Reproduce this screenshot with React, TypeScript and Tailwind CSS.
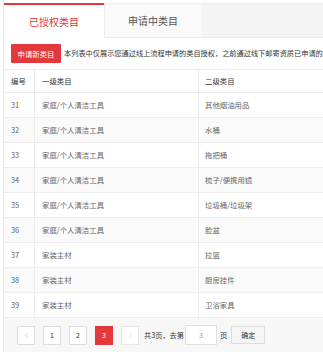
import { ChevronLeft, ChevronRight } from "lucide-react";

const rows = [
    { id: 31, first: "家庭/个人清洁工具", second: "其他烟油用品" },
    { id: 32, first: "家庭/个人清洁工具", second: "水桶" },
    { id: 33, first: "家庭/个人清洁工具", second: "拖把桶" },
    { id: 34, first: "家庭/个人清洁工具", second: "梳子/便携用镜" },
    { id: 35, first: "家庭/个人清洁工具", second: "垃圾桶/垃圾架" },
    { id: 36, first: "家庭/个人清洁工具", second: "脸盆" },
    { id: 37, first: "家装主材", second: "拉篮" },
    { id: 38, first: "家装主材", second: "厨房挂件" },
    { id: 39, first: "家装主材", second: "卫浴家具" },
];

export default function App() {
    return (
        <div
            className="w-[323px] h-[356px] bg-white overflow-hidden"
            style={{ fontFamily: '"Noto Sans CJK SC", "Noto Sans", sans-serif' }}
        >
            <div className="ml-[3px] h-[352px] border-l border-[#e6e6e6] flex flex-col">
                {/* Tabs */}
                <div className="flex h-[38px] pt-[3px]">
                    <div className="w-[100px] border-t-2 border-[#e4393c] bg-white flex items-center justify-center text-[10px] text-[#d9363e]">
                        已授权类目
                    </div>
                    <div className="w-[97px] border-l border-b border-t border-[#ececec] bg-[#fafafa] flex items-center justify-center text-[10px] text-[#555]">
                        申请中类目
                    </div>
                    <div className="flex-1 border-b border-t border-[#ececec] bg-[#f4f4f4]"></div>
                </div>

                {/* Toolbar */}
                <div className="flex items-center h-[31px] pl-[7px] whitespace-nowrap">
                    <div className="w-[50px] h-[19px] shrink-0 bg-[#e4393c] rounded-[1px] flex items-center justify-center text-[7.4px] text-white">
                        申请新类目
                    </div>
                    <span className="ml-[3px] text-[7.2px] text-[#333]">
                        本列表中仅展示您通过线上流程申请的类目授权，之前通过线下邮寄资质已申请的类目不在此展示
                    </span>
                </div>

                {/* Table */}
                <div className="border-t border-[#ececec] text-[7.4px]">
                    <div className="flex h-[23px] items-center text-[#333] border-b border-[#ececec]">
                        <div className="w-[31px] h-full flex items-center pl-[7px] border-r border-[#ececec]">编号</div>
                        <div className="w-[164px] h-full flex items-center pl-[7px] border-r border-[#ececec]">一级类目</div>
                        <div className="flex-1 h-full flex items-center pl-[6px]">二级类目</div>
                    </div>
                    {rows.map((r, i) => (
                        <div
                            key={r.id}
                            className={`flex h-[25px] items-center text-[#666] border-b border-[#ececec] ${i % 2 === 1 ? "bg-[#fafafa]" : "bg-white"}`}
                        >
                            <div className="w-[31px] h-full flex items-center pl-[7px] border-r border-[#ececec]">{r.id}</div>
                            <div className="w-[164px] h-full flex items-center pl-[7px] border-r border-[#ececec]">{r.first}</div>
                            <div className="flex-1 h-full flex items-center pl-[6px]">{r.second}</div>
                        </div>
                    ))}
                </div>

                {/* Pagination */}
                <div className="flex-1 bg-[#f7f7f7] flex items-center pl-[13px] text-[7px] text-[#333] whitespace-nowrap">
                    <div className="w-[18px] h-[19px] border border-[#dcdcdc] bg-white flex items-center justify-center text-[#aaa]">
                        <ChevronLeft size={9} strokeWidth={1.3} />
                    </div>
                    <div className="ml-[8px] w-[18px] h-[19px] border border-[#dcdcdc] bg-white flex items-center justify-center">1</div>
                    <div className="ml-[8px] w-[18px] h-[19px] border border-[#dcdcdc] bg-white flex items-center justify-center">2</div>
                    <div className="ml-[8px] w-[18px] h-[19px] bg-[#e4393c] text-white flex items-center justify-center">3</div>
                    <div className="ml-[8px] w-[18px] h-[19px] border border-[#e6e6e6] bg-white flex items-center justify-center text-[#ccc]">
                        <ChevronRight size={9} strokeWidth={1.3} />
                    </div>
                    <span className="ml-[5px] text-[7.2px]">共3页，去第</span>
                    <div className="ml-[1px] w-[32px] h-[20px] border border-[#e0e0e0] bg-white flex items-center justify-center text-[#999]">3</div>
                    <span className="ml-[3px] text-[7.4px]">页</span>
                    <div className="ml-[4px] w-[34px] h-[18px] border border-[#dcdcdc] bg-[#f5f5f5] flex items-center justify-center text-[#333]">确定</div>
                </div>
            </div>
        </div>
    );
}
